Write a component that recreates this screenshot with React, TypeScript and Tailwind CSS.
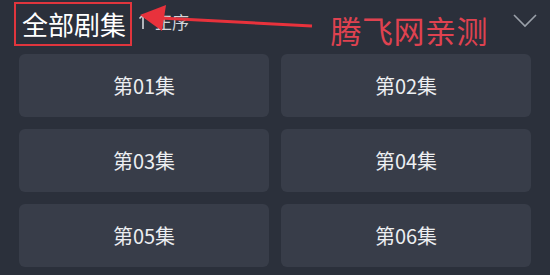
import React from 'react';

const episodes = ['第01集', '第02集', '第03集', '第04集', '第05集', '第06集'];

export default function App() {
  return (
    <div
      className="relative w-[550px] h-[275px] overflow-hidden bg-[#2b303b] px-[19px]"
      style={{ fontFamily: '"Noto Sans CJK SC", "Noto Sans", sans-serif' }}
    >
      {/* Header */}
      <div className="flex h-[54px] items-start pt-[2px]">
        <div className="ml-[-5px] flex h-[44px] items-center border-2 border-[#e0353d] pl-[6px] pr-[4px]">
          <span className="text-[26px] leading-none text-white">全部剧集</span>
        </div>
        <div className="ml-[6px] flex h-[40px] items-center gap-[1px] text-[17px] text-[#d3d6db]">
          <svg width="16" height="18" viewBox="0 0 16 18" fill="none" stroke="#d3d6db" strokeWidth="1.6">
            <path d="M5 2v14M1.5 5.5L5 2l3.5 3.5" />
          </svg>
          <span>正序</span>
        </div>
        <div className="flex-1" />
        <span className="mt-[12px] mr-[24px] text-[31px] leading-none tracking-[0.5px] text-[#df4250]">腾飞网亲测</span>
        <svg className="mt-[10px] mr-[-7px]" width="26" height="16" viewBox="0 0 26 16" fill="none" stroke="#9aa0a9" strokeWidth="1.6">
          <path d="M2 3l11 11L24 3" />
        </svg>
      </div>

      {/* Arrow annotation */}
      <svg className="pointer-events-none absolute left-0 top-0" width="550" height="60" viewBox="0 0 550 60">
        <line x1="160" y1="18" x2="312" y2="26" stroke="#e8323c" strokeWidth="3" />
        <polygon points="140,15 166,5 162,31" fill="#e8323c" />
      </svg>

      {/* Episode grid */}
      <div className="grid w-[512px] grid-cols-2 gap-x-[12px] gap-y-[12px]">
        {episodes.map((ep) => (
          <div
            key={ep}
            className="flex h-[63px] items-center justify-center rounded-[6px] bg-[#383d49] text-[20px] text-[#eceef1]"
          >
            {ep}
          </div>
        ))}
      </div>
    </div>
  );
}
